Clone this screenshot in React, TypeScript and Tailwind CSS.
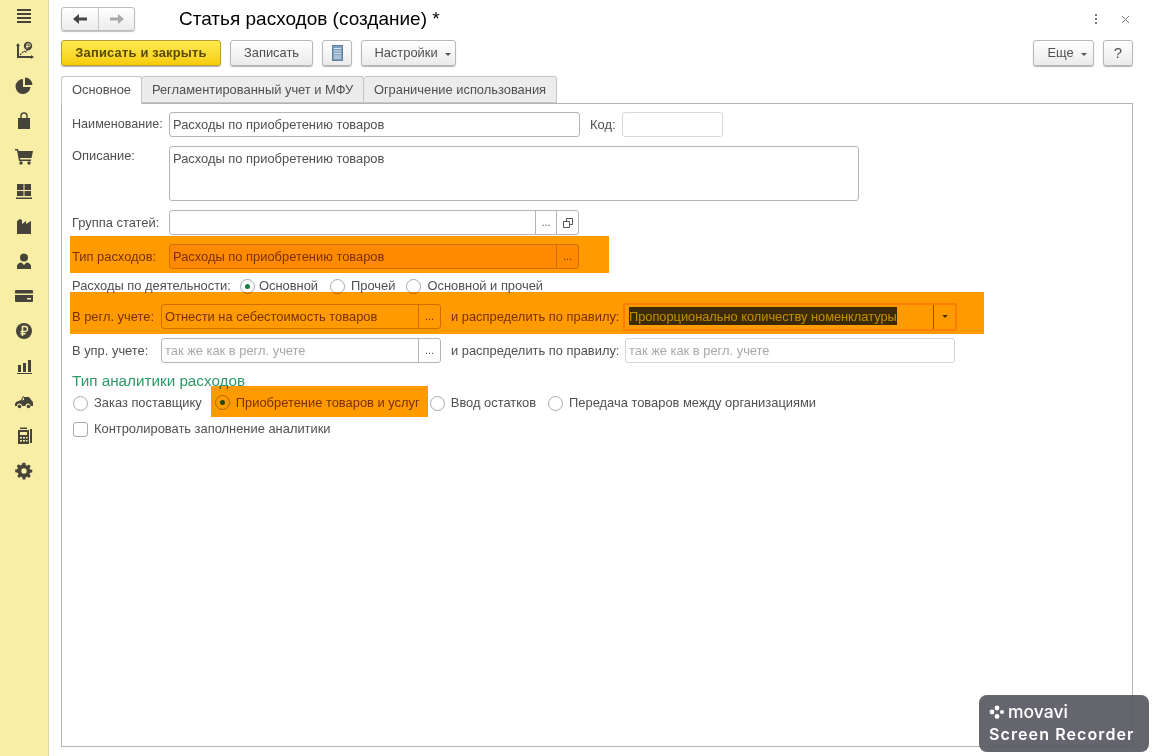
import type { ReactNode } from "react";

const font = "font-['Liberation_Sans',Arial,sans-serif]";

function Icon({ children }: { children: ReactNode }) {
  return (
    <div className="flex h-[35px] w-full items-center justify-center">
      <svg width="20" height="20" viewBox="0 0 20 20" fill="#46443a" stroke="none">
        {children}
      </svg>
    </div>
  );
}

function Sidebar() {
  return (
    <div className="flex h-full w-[49px] shrink-0 flex-col items-center border-r border-r-[#dcd7a8] bg-[#f8eea6] pr-[1px]">
      <div className="-mt-[2px] w-full">
        <Icon>
          <path d="M3 3h14v2H3zM3 7h14v2H3zM3 11h14v2H3zM3 15h14v2H3z" />
        </Icon>
      </div>
      <Icon>
        <path d="M4 2l2 3H5v10h12v-1l3 2-3 2v-1H3V5H2z" />
        <path d="M6 14l4-4 2 1 2-3" fill="none" stroke="#46443a" strokeWidth="1.2" strokeDasharray="2 1" />
        <circle cx="14" cy="5" r="4.2" />
        <path d="M13 7.5V3h2a1.2 1.2 0 010 2.6h-3" fill="none" stroke="#f8eea6" strokeWidth="1" />
      </Icon>
      <Icon>
        <path d="M9 3a7.5 7.5 0 107.5 8H9z" />
        <path d="M11 1.500a7.500 7.500 0 017.500 7.500H11z" />
      </Icon>
      <Icon>
        <path d="M4 7h12v11H4z" />
        <path d="M7 8V5a3 3 0 016 0v3" fill="none" stroke="#46443a" strokeWidth="1.400" />
      </Icon>
      <Icon>
        <path d="M1 3h3l.6 2H19l-1.500 7H6l.3 1.500H17V15H5L3 4.500H1z" />
        <circle cx="7" cy="17" r="1.700" />
        <circle cx="15" cy="17" r="1.700" />
      </Icon>
      <Icon>
        <path d="M3 3h6.500v6H3zM10.500 3H17v6h-6.500zM3 10h6.500v5H3zM10.500 10H17v5h-6.500zM2 16.500h16V18H2z" />
      </Icon>
      <Icon>
        <path d="M3 18V5l3-2 2 1v4l4-3v3l5-3v13z" />
      </Icon>
      <Icon>
        <circle cx="10" cy="6.500" r="4" />
        <path d="M3 18v-3c0-2 3-3.500 4.500-3.500L10 14l2.500-2.500c1.500 0 4.500 1.500 4.500 3.500v3z" />
      </Icon>
      <Icon>
        <path fillRule="evenodd" d="M2 4h16a1 1 0 011 1v10a1 1 0 01-1 1H2a1 1 0 01-1-1V5a1 1 0 011-1zM1 7.500V9h18V7.500zM13 12v1.500h4V12z" />
      </Icon>
      <Icon>
        <circle cx="10" cy="10" r="8" />
        <path d="M8.500 15V5.500h2.500a2.400 2.400 0 010 5H6.500M6.500 12.800h5" fill="none" stroke="#f8eea6" strokeWidth="1.500" />
      </Icon>
      <Icon>
        <path d="M4 9h3v7H4zM9 7h3v9H9zM14 4h3v12h-3zM3 17h15v1H3z" />
      </Icon>
      <Icon>
        <path d="M1 13l1-2 5-2 2-4 1 .5-2 4 2-.5V6h5l3 4 1 1v4h-2.500a2.500 2.500 0 00-5 0H8a2.500 2.500 0 00-5 0H1z" />
        <circle cx="5.500" cy="15.500" r="1.800" />
        <circle cx="14.500" cy="15.500" r="1.800" />
      </Icon>
      <Icon>
        <path fillRule="evenodd" d="M4 4h11v14H4zM6 6v3h7V6zM6 11v1.500h2V11zM9 11v1.500h2V11zM12 11v1.500h1.500V11zM6 14v1.500h2V14zM9 14v1.500h2V14zM12 14v1.500h1.500V14z" />
        <path d="M16 3h2v14h-2zM6 1.500h7V3H6z" />
      </Icon>
      <Icon>
        <path
          fillRule="evenodd"
          d="M8.500 1.500h3l.4 2.400 1.500.7 2-1.400 2.100 2.100-1.400 2 .7 1.500 2.400.4v3l-2.400.4-.7 1.500 1.400 2-2.100 2.100-2-1.400-1.500.7-.4 2.400h-3l-.4-2.400-1.500-.7-2 1.400-2.100-2.100 1.400-2-.7-1.500L.2 12V9l2.400-.4.7-1.500-1.400-2 2.100-2.100 2 1.400 1.500-.7zM10 7.500a3 3 0 100 6 3 3 0 000-6z"
          transform="translate(1 .5) scale(.9)"
        />
      </Icon>
    </div>
  );
}

function Btn({ className = "", children }: { className?: string; children: ReactNode }) {
  return (
    <div
      className={`flex h-[26px] items-center justify-center rounded-[3px] border border-[#b8b8b8] bg-gradient-to-b from-white to-[#ebebeb] text-[#505050] shadow-[0_1px_1px_rgba(0,0,0,0.3)] ${className}`}
    >
      {children}
    </div>
  );
}

function Caret({ className = "ml-[6px]" }: { className?: string }) {
  return <span className={`mt-[2px] h-0 w-0 border-x-[3px] border-t-[3px] border-x-transparent border-t-[#555] ${className}`} />;
}

function Tab({ active, className = "", children }: { active?: boolean; className?: string; children: ReactNode }) {
  return (
    <div
      className={`relative flex h-[27px] items-center justify-center rounded-t-[3px] border border-[#c4c4c4] text-[#505050] ${
        active ? "z-10 h-[28px] border-b-0 bg-white pb-[1px]" : "border-l-0 bg-[#ececec]"
      } ${className}`}
    >
      {children}
    </div>
  );
}

function Input({ className = "", children }: { className?: string; children?: ReactNode }) {
  return (
    <div className={`flex h-[25px] items-center overflow-hidden rounded-[3px] border pl-[3px] ${className}`}>
      {children}
    </div>
  );
}

function Addon({ className = "w-[22px] border-l-[#b5b5b5]", children }: { className?: string; children: ReactNode }) {
  return <div className={`flex h-full shrink-0 items-center justify-center border-l text-[11px] ${className}`}>{children}</div>;
}

function Radio({ on, className = "" }: { on?: boolean; className?: string }) {
  return (
    <span className={`flex h-[15px] w-[15px] shrink-0 items-center justify-center rounded-full border border-[#a9a9a9] bg-white ${className}`}>
      {on && <span className="h-[5px] w-[5px] rounded-full bg-[#1c7a4a]" />}
    </span>
  );
}

function Row({ className = "", children }: { className?: string; children: ReactNode }) {
  return <div className={`relative flex items-center ${className}`}>{children}</div>;
}

// orange marker strokes drawn over the form
function Marker({ className }: { className: string }) {
  return <div className={`pointer-events-none absolute z-20 bg-[#ff9a00] mix-blend-multiply ${className}`} />;
}

export default function App() {
  return (
    <div className={`relative flex h-[756px] w-[1152px] overflow-hidden bg-white text-[12.9px] ${font}`}>
      <Sidebar />
      <div className="flex min-w-0 flex-1 flex-col pl-[12px] pr-[19px] pt-[7px]">
        <div className="flex h-[24px] items-center">
          <div className="flex h-[24px] w-[74px] rounded-[3px] border border-[#bdbdbd] bg-gradient-to-b from-white to-[#ececec] shadow-[0_1px_1px_rgba(0,0,0,0.25)]">
            <div className="flex w-[37px] items-center justify-center border-r border-r-[#c8c8c8]">
              <svg width="16" height="12" viewBox="0 0 16 12" fill="#444">
                <path d="M7 1v3.500h8v3H7V11L1 6z" />
              </svg>
            </div>
            <div className="flex flex-1 items-center justify-center">
              <svg width="16" height="12" viewBox="0 0 16 12" fill="#a8a8a8">
                <path d="M9 1v3.500H1v3h8V11l6-5z" />
              </svg>
            </div>
          </div>
          <div className="-mt-[2px] ml-[44px] text-[19px] leading-none text-black">Статья расходов (создание) *</div>
          <div className="ml-auto flex items-center pr-[3px]">
            <div className="flex flex-col gap-[1.500px]">
              <span className="h-[2.500px] w-[2.500px] bg-[#777]" />
              <span className="h-[2.500px] w-[2.500px] bg-[#777]" />
              <span className="h-[2.500px] w-[2.500px] bg-[#777]" />
            </div>
            <svg className="ml-[24px]" width="9" height="9" viewBox="0 0 9 9" stroke="#777" fill="none">
              <path d="M1 1l7 7M8 1L1 8" />
            </svg>
          </div>
        </div>

        <div className="mt-[9px] flex h-[27px] items-start">
          <div className="flex h-[26px] w-[160px] items-center justify-center rounded-[3px] border border-[#b3a032] bg-gradient-to-b from-[#ffeb4d] to-[#f6cc00] font-bold tracking-[0.2px] text-[#5a4a00] shadow-[0_1px_1px_rgba(0,0,0,0.3)]">
            Записать и закрыть
          </div>
          <Btn className="ml-[9px] w-[83px]">Записать</Btn>
          <Btn className="ml-[9px] w-[30px]">
            <svg width="11" height="16" viewBox="0 0 11 16">
              <rect x="0.500" y="0.500" width="10" height="15" fill="#7f9fbd" stroke="#5f7f9f" />
              <path d="M2 3.500h7M2 6h7M2 8.500h7M2 11h7M2 13h7" stroke="#d8e4ee" />
            </svg>
          </Btn>
          <Btn className="ml-[9px] w-[95px] pl-[8px]">
            Настройки
            <Caret className="ml-[7px]" />
          </Btn>
          <Btn className="ml-auto w-[61px] pl-[7px]">
            Еще
            <Caret className="ml-[7px]" />
          </Btn>
          <Btn className="ml-[9px] w-[30px] text-[15px] text-[#333]">?</Btn>
        </div>

        <div className="relative z-10 mt-[9px] flex h-[28px] items-start">
          <Tab active className="w-[81px]">
            Основное
          </Tab>
          <Tab className="w-[222px]">Регламентированный учет и МФУ</Tab>
          <Tab className="w-[193px]">Ограничение использования</Tab>
        </div>

        <div className="-mt-px mb-[9px] flex-1 border border-[#b4b4b4] pl-[10px] pt-[8px] text-[#505050]">
          <Row>
            <span className="w-[97px] text-[12.600px]">Наименование:</span>
            <Input className="w-[411px] border-[#b5b5b5]">Расходы по приобретению товаров</Input>
            <span className="ml-[10px] w-[32px]">Код:</span>
            <Input className="w-[101px] border-[#d8d8d8]" />
          </Row>

          <div className="mt-[9px] flex">
            <span className="w-[97px]">Описание:</span>
            <div className="h-[55px] w-[690px] rounded-[3px] border border-[#b5b5b5] px-[3px] pt-[2px]">
              Расходы по приобретению товаров
            </div>
          </div>

          <Row className="mt-[9px]">
            <span className="w-[97px]">Группа статей:</span>
            <Input className="w-[410px] justify-end border-[#b5b5b5]">
              <Addon className="w-[21px] border-l-[#b5b5b5]">...</Addon>
              <Addon>
                <svg width="10" height="10" viewBox="0 0 10 10" fill="none" stroke="#555">
                  <path d="M.5 3.500h6v6h-6zM3.500 3.500v-3h6v6h-3" />
                </svg>
              </Addon>
            </Input>
          </Row>

          <Row className="mt-[9px] text-[#7a5040]">
            <Marker className="-left-[2px] -top-[8px] h-[37px] w-[539px]" />
            <span className="w-[97px]">Тип расходов:</span>
            <Input className="w-[410px] border-[#d0b8b0] bg-[#ffe4e0]">
              <span className="flex-1">Расходы по приобретению товаров</span>
              <Addon className="w-[22px] border-l-[#d0b8b0]">...</Addon>
            </Input>
          </Row>

          <Row className="mt-[9px] h-[16px]">
            <span>Расходы по деятельности:</span>
            <Radio on className="ml-[9px]" />
            <span className="ml-[4px]">Основной</span>
            <Radio className="ml-[12px]" />
            <span className="ml-[6px]">Прочей</span>
            <Radio className="ml-[11px]" />
            <span className="ml-[6px]">Основной и прочей</span>
          </Row>

          <Row className="mt-[10px] h-[25px] text-[#7a5040]">
            <Marker className="-left-[2px] -top-[12px] h-[42px] w-[914px]" />
            <span className="w-[89px]">В регл. учете:</span>
            <Input className="w-[280px] border-[#d0b8b0]">
              <span className="flex-1">Отнести на себестоимость товаров</span>
              <Addon className="w-[22px] border-l-[#d0b8b0]">...</Addon>
            </Input>
            <span className="ml-[10px] w-[172px]">и распределить по правилу:</span>
            <div className="flex h-[28px] w-[334px] shrink-0 items-center rounded-[2px] border-2 border-[#ffd0c0] pl-[4px]">
              <span className="flex-1 text-[12.800px]">
                <span className="bg-[#3c4600] py-[1.500px] text-[#c0e6ff]">Пропорционально количеству номенклатуры</span>
              </span>
              <div className="flex h-[24px] w-[22px] items-center justify-center border-l border-l-[#a86a30]">
                <span className="h-0 w-0 border-x-[3px] border-t-[3px] border-x-transparent border-t-[#555]" />
              </div>
            </div>
          </Row>

          <Row className="mt-[9px]">
            <span className="w-[89px]">В упр. учете:</span>
            <Input className="w-[280px] border-[#b5b5b5] text-[#a8a8a8]">
              <span className="flex-1">так же как в регл. учете</span>
              <Addon className="w-[22px] border-l-[#b5b5b5] text-[#555]">...</Addon>
            </Input>
            <span className="ml-[10px] w-[174px]">и распределить по правилу:</span>
            <Input className="w-[330px] border-[#d4d4d4] text-[#a8a8a8]">так же как в регл. учете</Input>
          </Row>

          <div className="mt-[9px] h-[18px] text-[15.250px] leading-[18px] text-[#2e9a66]">Тип аналитики расходов</div>

          <Row className="mt-[3px] h-[20px]">
            <Radio className="ml-[1px]" />
            <span className="ml-[6px]">Заказ поставщику</span>
            <div className="relative ml-[9px] flex w-[217px] shrink-0 items-center pl-[4px] text-[#7a5040]">
              <Marker className="-top-[7px] left-0 h-[31px] w-[217px]" />
              <Radio on />
              <span className="ml-[6px]">Приобретение товаров и услуг</span>
            </div>
            <Radio className="ml-[2px]" />
            <span className="ml-[6px]">Ввод остатков</span>
            <Radio className="ml-[12px]" />
            <span className="ml-[6px]">Передача товаров между организациями</span>
          </Row>

          <Row className="mt-[6px] h-[20px]">
            <span className="ml-[1px] h-[15px] w-[15px] rounded-[3px] border border-[#a9a9a9]" />
            <span className="ml-[6px]">Контролировать заполнение аналитики</span>
          </Row>
        </div>
      </div>

      <div className="absolute left-[979px] top-[695px] z-30 flex h-[57px] w-[170px] flex-col rounded-[8px] bg-[#54555d]/90 pl-[10px] pt-[7px] text-white">
        <div className="flex h-[20px] items-center">
          <svg width="16" height="14" viewBox="0 0 16 14" fill="#fff">
            <circle cx="8" cy="3" r="2.400" />
            <circle cx="3" cy="7" r="2.400" />
            <circle cx="13" cy="7" r="2" />
            <circle cx="8" cy="11.500" r="2.400" />
          </svg>
          <span className="ml-[3px] font-['Inter',sans-serif] text-[17.500px] font-medium leading-none">movavi</span>
        </div>
        <div className="mt-[2px] font-['Inter',sans-serif] text-[16px] font-semibold leading-[20px] tracking-[1.100px]">Screen Recorder</div>
      </div>
    </div>
  );
}
